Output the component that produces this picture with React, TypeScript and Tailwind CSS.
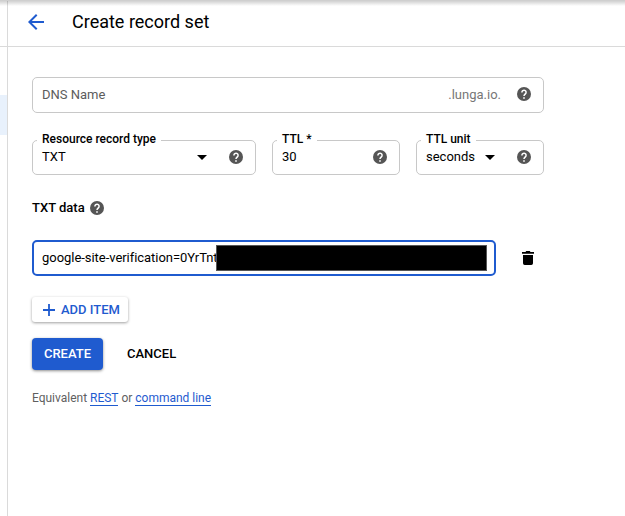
import type { ReactNode } from "react";
import { MdArrowBack, MdArrowDropDown } from "react-icons/md";

function Help() {
  return (
    <svg className="shrink-0" width="14" height="14" viewBox="0 0 14 14">
      <circle cx="7" cy="7" r="7" fill="#555" />
      <path d="M4.900 5.400a2.100 2.100 0 1 1 3.500 1.500C7.600 7.600 7 7.900 7 9" fill="none" stroke="#fff" strokeWidth="1.500" />
      <path d="M6.200 10.200h1.600v1.600H6.200z" fill="#fff" />
    </svg>
  );
}

function Outlined({ label, className, children }: { label: string; className: string; children: ReactNode }) {
  return (
    <div className={`relative flex h-[35px] items-center rounded-[5px] border border-[#c8c8c8] pb-px pl-[9px] pr-3 ${className}`}>
      <span className="absolute -top-[10px] left-1 whitespace-nowrap bg-white px-[5px] text-[12px] leading-[16px] font-medium">
        {label}
      </span>
      {children}
    </div>
  );
}

export default function App() {
  return (
    <div className="relative flex h-[516px] w-[625px] overflow-hidden bg-white font-['Roboto',sans-serif] text-black">
      <div className="absolute inset-x-0 top-0 h-[6px] border-t border-[#cfcfcf] bg-linear-to-b from-black/18 to-transparent" />
      <aside className="flex w-2 shrink-0 flex-col border-r border-[#dadada]">
        <div className="box-content h-[46px] border-b border-[#dadada]" />
        <div className="mt-12 h-10 bg-[#e8f1fc]" />
      </aside>
      <main className="flex-1">
        <header className="flex h-[47px] items-center border-b border-[#dadada] pb-[2px] pl-4">
          <MdArrowBack size={24} className="text-[#1f5bcf]" />
          <h1 className="ml-6 text-[18px] leading-6">Create record set</h1>
        </header>
        <div className="flex flex-col pl-6 pt-[30px]">
          <div className="flex h-9 w-[512px] items-center rounded-[5px] border border-[#c8c8c8] pl-[9px] pr-3 text-[13px] text-[#5c5c5c]">
            <span className="flex-1">DNS Name</span>
            <span className="mr-4 text-[#777]">.lunga.io.</span>
            <div className="pb-[2px]">
              <Help />
            </div>
          </div>
          <div className="mt-[27px] flex gap-4 text-[13px]">
            <Outlined label="Resource record type" className="w-[224px]">
              <span className="flex-1 pb-px">TXT</span>
              <MdArrowDropDown size={24} className="mr-[15px]" />
              <Help />
            </Outlined>
            <Outlined label="TTL *" className="w-32">
              <span className="flex-1 pb-px">30</span>
              <Help />
            </Outlined>
            <Outlined label="TTL unit" className="w-32">
              <span className="flex-1 pb-px">seconds</span>
              <MdArrowDropDown size={24} className="mr-[15px]" />
              <Help />
            </Outlined>
          </div>
          <div className="mt-[23px] flex h-5 items-center text-[13px] font-medium">
            <span className="w-[58px]">TXT data</span>
            <Help />
          </div>
          <div className="mt-[22px] flex items-center">
            <div className="flex h-9 w-[464px] items-center rounded-[5px] border-2 border-[#1f5bcf] pl-2 text-[13px]">
              <span className="w-[174px] whitespace-nowrap tracking-[-0.04px]">google-site-verification=0YrTnt</span>
              <span className="relative h-[26px] w-[271px] border border-[#555] bg-black" />
            </div>
            <svg className="ml-[26px]" width="12" height="14" viewBox="0 0 12 14">
              <path d="M0 1h3.500L4.200 0h3.600l.7 1H12v1.800H0zM1 4h10v8.300A1.700 1.700 0 0 1 9.300 14H2.700A1.700 1.700 0 0 1 1 12.300z" />
            </svg>
          </div>
          <button className="mt-[21px] flex h-[25px] w-24 items-center rounded-[3px] pl-[11px] text-[13px] font-medium text-[#1f5bcf] shadow-[0_1px_3px_rgba(0,0,0,.38)]">
            <svg width="12" height="12" viewBox="0 0 12 12">
              <path d="M6 0v12M0 6h12" stroke="currentColor" strokeWidth="1.8" />
            </svg>
            <span className="ml-[6px]">ADD ITEM</span>
          </button>
          <div className="mt-4 flex text-[13px] font-medium">
            <button className="h-8 w-[71px] rounded-[4px] bg-[#1f5bcf] text-white shadow-[0_1px_3px_rgba(0,0,0,.45)]">CREATE</button>
            <button className="ml-6 h-8">CANCEL</button>
          </div>
          <p className="mt-5 text-[12px] leading-4 tracking-[-0.01px] text-[#5f5f5f]">
            Equivalent <a className="inline-block h-4 border-b border-[#1f5bcf] text-[#1f5bcf]">REST</a> or{" "}
            <a className="inline-block h-4 border-b border-[#1f5bcf] text-[#1f5bcf]">command line</a>
          </p>
        </div>
      </main>
    </div>
  );
}
